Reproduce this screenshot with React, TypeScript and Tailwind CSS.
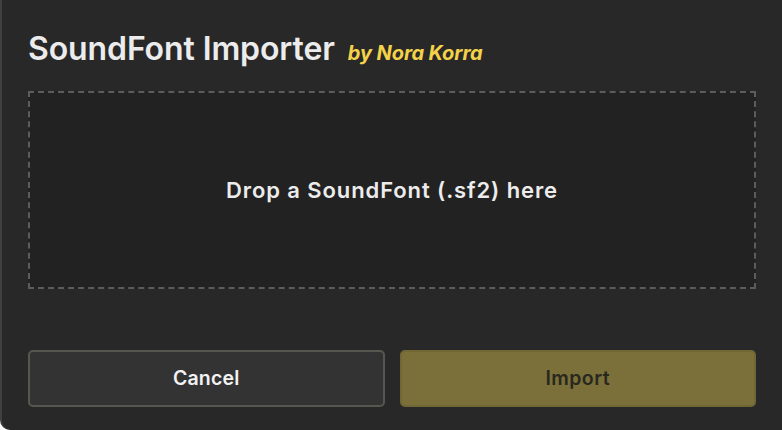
import React from "react";

export default function App() {
  return (
    <div
      className="w-[782px] h-[430px] bg-[#282828] border-l-2 border-[#404040] rounded-bl-[10px] overflow-hidden flex flex-col pl-[26px] pr-[26px]"
      style={{ fontFamily: 'Inter, "Noto Sans", sans-serif' }}
    >
      <div className="h-[91px] flex items-baseline gap-[13px] pt-[30px]">
        <span className="text-[32px] leading-[38px] font-semibold text-[#ececec] tracking-[-0.1px]">
          SoundFont Importer
        </span>
        <span className="text-[20px] font-bold italic text-[#f4d24a] tracking-[-0.1px]">by Nora Korra</span>
      </div>
      <div className="h-[198px] bg-[#222222] border-2 border-dashed border-[#5c5c5c] flex items-center justify-center">
        <span className="text-[22px] font-semibold text-[#ececec] tracking-[0.9px]">Drop a SoundFont (.sf2) here</span>
      </div>
      <div className="flex gap-[15px] mt-[61px]">
        <button className="flex-1 h-[57px] bg-[#333333] border-2 border-[#58574f] rounded-[5px] text-[19.5px] font-semibold text-[#f2f2f2] tracking-[0.2px]">
          Cancel
        </button>
        <button className="flex-1 h-[57px] bg-[#7c703a] border-2 border-[#716734] rounded-[5px] text-[19.5px] font-semibold text-[#29281f] tracking-[0.4px]">
          Import
        </button>
      </div>
    </div>
  );
}
